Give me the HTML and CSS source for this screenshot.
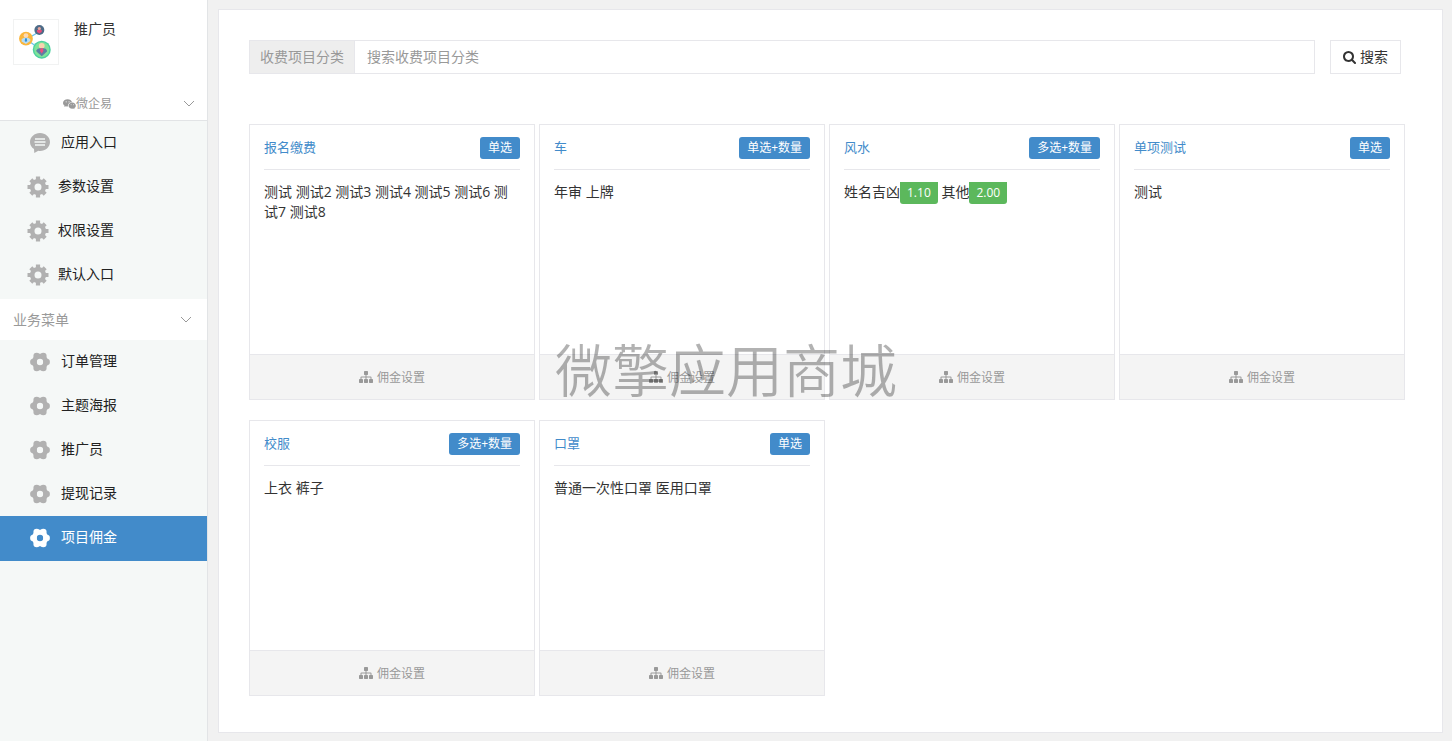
FILE: index.html
```html
<!DOCTYPE html>
<html lang="zh-CN">
<head>
<meta charset="utf-8">
<meta name="viewport" content="width=device-width, initial-scale=1">
<title>项目佣金</title>
<link rel="stylesheet" href="styles.css">
</head>
<body>
<svg class="sprite" aria-hidden="true">
  <symbol id="gear" viewBox="0 0 22 22">
    <circle cx="11" cy="11" r="5.8" fill="none" stroke="currentColor" stroke-width="4.6"/>
    <path d="M11 .5v5M11 16.5v5M.5 11h5M16.5 11h5M3.800 3.800l3.400 3.400M14.800 14.800l3.400 3.400M3.800 18.200l3.400-3.400M14.800 7.200l3.400-3.400" stroke="currentColor" stroke-width="4.200" fill="none"/>
  </symbol>
  <symbol id="flower" viewBox="0 0 20 20">
    <circle cx="10" cy="10" r="5.700" stroke-width="5" fill="none" stroke="currentColor"/>
    <g fill="currentColor">
      <circle cx="3.400" cy="10" r="3.300"/>
      <circle cx="16.600" cy="10" r="3.300"/>
      <circle cx="6.700" cy="4" r="3.300"/>
      <circle cx="13.300" cy="4" r="3.300"/>
      <circle cx="6.700" cy="16" r="3.300"/>
      <circle cx="13.300" cy="16" r="3.300"/>
    </g>
  </symbol>
  <symbol id="chat" viewBox="0 0 20 20">
    <path fill="currentColor" fill-rule="evenodd" d="M10 0C4.500 0 0 4 0 9c0 3 1.600 5.500 4 7l.3 4 4-2.200q.8.200 1.700.200c5.500 0 10-4 10-9s-4.500-9-10-9zM5 5.300h10v1.400H5zM4.500 8.300h11v1.400h-11zM5 11.300h10v1.400H5z"/>
  </symbol>
  <symbol id="chevron" viewBox="0 0 12 8">
    <path d="M1 1l5 5 5-5" fill="none" stroke="currentColor"/>
  </symbol>
  <symbol id="sitemap" viewBox="0 0 1792 1792">
    <path fill="currentColor" d="M1792 1248v320q0 40-28 68t-68 28h-320q-40 0-68-28t-28-68v-320q0-40 28-68t68-28h96V960H960v192h96q40 0 68 28t28 68v320q0 40-28 68t-68 28H736q-40 0-68-28t-28-68v-320q0-40 28-68t68-28h96V960H320v192h96q40 0 68 28t28 68v320q0 40-28 68t-68 28H96q-40 0-68-28t-28-68v-320q0-40 28-68t68-28h96V960q0-52 38-90t90-38h512V640h-96q-40 0-68-28t-28-68V224q0-40 28-68t68-28h320q40 0 68 28t28 68v320q0 40-28 68t-68 28h-96v192h512q52 0 90 38t38 90v192h96q40 0 68 28t28 68z"/>
  </symbol>
</svg>

<div class="layout">
  <aside class="sidebar">
    <header class="profile">
      <div class="profile-app">
        <svg class="logo" viewBox="0 0 46 46" aria-hidden="true">
          <path d="M13 20L27 12M13 20l16 12" stroke="#6cc3ee" stroke-width="1.300" fill="none"/>
          <circle cx="26.500" cy="10.500" r="5.200" fill="#4d6b87"/>
          <circle cx="26.500" cy="9" r="1.700" fill="#e9a39b"/>
          <path d="M24 10.500h5v2l-2.500 1.500-2.500-1.500z" fill="#e84a78"/>
          <circle cx="12.500" cy="19.500" r="7.200" fill="#fbb63c"/>
          <circle cx="12.500" cy="16.300" r="2.500" fill="#fcd9b4"/>
          <path d="M8 20.500q1-2 3-2h3q2 0 3 2V22l-4.500 3L8 22.500z" fill="#b9dcf2"/>
          <path d="M11.700 19h1.600l.5 3-1.300 1-1.300-1z" fill="#2e91dc"/>
          <circle cx="29" cy="31" r="9.400" fill="#4bd0a0"/>
          <circle cx="29" cy="31" r="7.900" fill="#7fe39a"/>
          <circle cx="29" cy="27" r="3" fill="#f9d3b0"/>
          <path d="M23.500 31.500q1-2 3.500-2h4q2.500 0 3.500 2V33L29 38l-5.500-5z" fill="#5d7fa3"/>
          <path d="M27.800 29.500h2.400l.6 3L29 35l-1.800-2.500z" fill="#ee4e7c"/>
        </svg>
        <h1 class="profile-name">推广员</h1>
      </div>
      <button class="account" type="button">
        <svg class="wechat" viewBox="0 0 14 12" aria-hidden="true">
          <path fill="currentColor" d="M5 1C2.200 1 0 2.700 0 4.900c0 1.200.7 2.300 1.800 3l-.4 1.400 1.600-.8q1 .3 2.200.3C5 6 6.800 4 9.700 4 9.200 2.300 7.300 1 5 1z"/>
          <path fill="currentColor" d="M13.800 7.800c0-1.800-1.700-3.300-3.900-3.300S6 6 6 7.800 7.700 11 9.900 11l1.200-.2 1.300.8-.3-1.200c1-.6 1.700-1.500 1.700-2.600z"/>
          <g fill="#fff"><circle cx="3.400" cy="3.700" r=".6"/><circle cx="6.500" cy="3.700" r=".6"/><circle cx="8.700" cy="6.900" r=".5"/><circle cx="11.200" cy="6.900" r=".5"/></g>
        </svg>
        <span>微企易</span>
        <svg class="chevron" aria-hidden="true"><use href="#chevron"/></svg>
      </button>
    </header>
    <nav class="menu menu-system">
      <a class="item item-chat" href="#"><svg class="icon" aria-hidden="true"><use href="#chat"/></svg>应用入口</a>
      <a class="item item-gear" href="#"><svg class="icon" aria-hidden="true"><use href="#gear"/></svg>参数设置</a>
      <a class="item item-gear" href="#"><svg class="icon" aria-hidden="true"><use href="#gear"/></svg>权限设置</a>
      <a class="item item-gear" href="#"><svg class="icon" aria-hidden="true"><use href="#gear"/></svg>默认入口</a>
    </nav>
    <button class="section" type="button">
      <span>业务菜单</span>
      <svg class="chevron" aria-hidden="true"><use href="#chevron"/></svg>
    </button>
    <nav class="menu">
      <a class="item" href="#"><svg class="icon" aria-hidden="true"><use href="#flower"/></svg>订单管理</a>
      <a class="item" href="#"><svg class="icon" aria-hidden="true"><use href="#flower"/></svg>主题海报</a>
      <a class="item" href="#"><svg class="icon" aria-hidden="true"><use href="#flower"/></svg>推广员</a>
      <a class="item" href="#"><svg class="icon" aria-hidden="true"><use href="#flower"/></svg>提现记录</a>
      <a class="item active" href="#" aria-current="page"><svg class="icon" aria-hidden="true"><use href="#flower"/></svg>项目佣金</a>
    </nav>
  </aside>

  <main class="panel">
    <form class="search">
      <div class="search-group">
        <label class="search-label" for="keyword">收费项目分类</label>
        <input class="search-input" id="keyword" type="text" placeholder="搜索收费项目分类">
      </div>
      <button class="search-button" type="button">
        <svg class="search-icon" viewBox="0 0 1664 1792" aria-hidden="true"><path fill="currentColor" d="M1152 832q0-185-131.500-316.500T704 384 387.500 515.500 256 832t131.500 316.500T704 1280t316.500-131.500T1152 832zm512 832q0 52-38 90t-90 38q-54 0-90-38l-343-342q-179 124-399 124-143 0-273.500-55.500t-225-150-150-225T0 832t55.500-273.500 150-225 225-150T704 128t273.500 55.500 225 150 150 225T1408 832q0 220-124 399l343 343q37 37 37 90z"/></svg>
        搜索
      </button>
    </form>

    <section class="cards">
      <article class="card">
        <header class="card-head"><h2 class="card-title">报名缴费</h2><span class="badge">单选</span></header>
        <p class="card-body">测试 测试2 测试3 测试4 测试5 测试6 测试7 测试8</p>
        <a class="card-foot" href="#"><svg class="sitemap" aria-hidden="true"><use href="#sitemap"/></svg>佣金设置</a>
      </article>
      <article class="card">
        <header class="card-head"><h2 class="card-title">车</h2><span class="badge">单选+数量</span></header>
        <p class="card-body">年审 上牌</p>
        <a class="card-foot" href="#"><svg class="sitemap" aria-hidden="true"><use href="#sitemap"/></svg>佣金设置</a>
      </article>
      <article class="card">
        <header class="card-head"><h2 class="card-title">风水</h2><span class="badge">多选+数量</span></header>
        <p class="card-body">姓名吉凶<span class="price">1.10</span> 其他<span class="price">2.00</span></p>
        <a class="card-foot" href="#"><svg class="sitemap" aria-hidden="true"><use href="#sitemap"/></svg>佣金设置</a>
      </article>
      <article class="card">
        <header class="card-head"><h2 class="card-title">单项测试</h2><span class="badge">单选</span></header>
        <p class="card-body">测试</p>
        <a class="card-foot" href="#"><svg class="sitemap" aria-hidden="true"><use href="#sitemap"/></svg>佣金设置</a>
      </article>
      <article class="card">
        <header class="card-head"><h2 class="card-title">校服</h2><span class="badge">多选+数量</span></header>
        <p class="card-body">上衣 裤子</p>
        <a class="card-foot" href="#"><svg class="sitemap" aria-hidden="true"><use href="#sitemap"/></svg>佣金设置</a>
      </article>
      <article class="card">
        <header class="card-head"><h2 class="card-title">口罩</h2><span class="badge">单选</span></header>
        <p class="card-body">普通一次性口罩 医用口罩</p>
        <a class="card-foot" href="#"><svg class="sitemap" aria-hidden="true"><use href="#sitemap"/></svg>佣金设置</a>
      </article>
    </section>
  </main>
</div>
<div class="watermark">微擎应用商城</div>
</body>
</html>
```

FILE: styles.css
```css
* {
  box-sizing: border-box;
}

body {
  margin: 0;
  background: #f1f1f1;
  color: #333;
  font: 14px/20px "Open Sans", "Noto Sans CJK SC", sans-serif;
}

a {
  color: inherit;
  text-decoration: none;
}

button,
input {
  margin: 0;
  padding: 0;
  border: 0;
  border-radius: 0;
  background: none;
  color: inherit;
  font: inherit;
}

h1,
h2,
p {
  margin: 0;
  font-weight: 400;
}

svg {
  flex: none;
  display: block;
}

.sprite {
  position: absolute;
  width: 0;
  height: 0;
}

.layout {
  display: flex;
  min-height: 100vh;
}

/* Sidebar */

.sidebar {
  flex: none;
  width: 208px;
  border-right: 1px solid #e2e4e6;
  background: #f5f8f7;
}

.profile {
  padding-top: 19px;
  border-bottom: 1px solid #e2e4e6;
  background: #fff;
}

.profile-app {
  display: flex;
  gap: 15px;
  padding-left: 13px;
}

.logo {
  width: 46px;
  height: 46px;
  border: 1px solid #f1f2f2;
}

.profile-name {
  font-size: 14px;
  line-height: 20px;
}

.account {
  display: flex;
  align-items: center;
  width: 100%;
  margin-top: 20px;
  padding: 9px 12px 6px 63px;
  color: #999;
  font-size: 12px;
}

.wechat {
  width: 13px;
  height: 12px;
}

.chevron {
  width: 12px;
  height: 8px;
  margin-left: auto;
}

.menu-system {
  padding-bottom: 2px;
}

.item {
  display: flex;
  align-items: center;
  gap: 11px;
  height: 44px;
  padding-bottom: 2px;
  padding-left: 30px;
  color: #222;
}

.item-gear {
  gap: 9px;
  padding-left: 27px;
}

.icon {
  width: 20px;
  height: 20px;
  margin-top: 2px;
  color: #b1b1b1;
}

.item-gear .icon {
  width: 22px;
  height: 22px;
}

.section {
  display: flex;
  align-items: center;
  width: 100%;
  height: 41px;
  padding: 0 15px 0 13px;
  background: #fff;
  color: #999;
}

.active {
  height: 45px;
  padding-bottom: 3px;
  background: #428bca;
  color: #fff;
}

.active .icon {
  color: #fff;
}

/* Main panel */

.panel {
  flex: 1;
  min-width: 0;
  margin: 9px 9px 8px 10px;
  padding: 30px 37px 30px 30px;
  border: 1px solid #e7e7eb;
  background: #fff;
}

.search {
  display: flex;
  gap: 15px;
  padding-right: 4px;
}

.search-group {
  display: flex;
  flex: 1;
  height: 34px;
  border: 1px solid #e7e7eb;
}

.search-label {
  padding: 6px 10px;
  border-right: 1px solid #e7e7eb;
  background: #eee;
  color: #999;
}

.search-input {
  flex: 1;
  min-width: 0;
  padding: 0 12px;
}

.search-input::placeholder {
  color: #999;
  opacity: 1;
}

.search-button {
  display: flex;
  align-items: center;
  gap: 4px;
  padding: 0 12px;
  border: 1px solid #e7e7eb;
}

.search-icon {
  width: 13px;
  height: 14px;
}

.cards {
  display: grid;
  grid-template-columns: repeat(auto-fill, minmax(280px, 1fr));
  gap: 20px 4px;
  margin-top: 50px;
}

.card {
  display: flex;
  flex-direction: column;
  min-height: 276px;
  border: 1px solid #e7e7eb;
}

.card-head {
  display: flex;
  justify-content: space-between;
  align-items: flex-start;
  margin: 0 14px;
  padding: 12px 0 10px;
  border-bottom: 1px solid #e7e7eb;
}

.card-title {
  color: #428bca;
  font-size: 13px;
  line-height: 20px;
}

.badge {
  padding: 0 8px;
  border-radius: 3px;
  background: #428bca;
  color: #fff;
  font-size: 12px;
  line-height: 22px;
}

.card-body {
  flex: 1;
  padding: 12px 14px;
}

.price {
  display: inline-block;
  padding: 0 7px;
  border-radius: 0 0 3px 3px;
  background: #5cb85c;
  color: #fff;
  font-size: 12px;
  line-height: 22px;
}

.card-foot {
  display: flex;
  justify-content: center;
  align-items: center;
  gap: 4px;
  height: 45px;
  padding-top: 2px;
  border-top: 1px solid #e7e7eb;
  background: #f4f4f4;
  color: #999;
  font-size: 12px;
}

.sitemap {
  width: 14px;
  height: 14px;
  margin-bottom: 2px;
}

.watermark {
  position: fixed;
  inset: 0;
  display: flex;
  justify-content: center;
  align-items: center;
  padding-bottom: 6px;
  color: rgba(0, 0, 0, 0.3);
  font-family: "Noto Sans CJK SC", sans-serif;
  font-size: 57px;
  font-weight: 350;
  line-height: 1;
  pointer-events: none;
}
```
